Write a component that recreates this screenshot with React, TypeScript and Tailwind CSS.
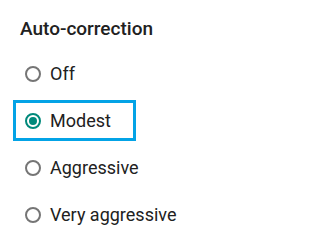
import React from "react";

const options = ["Off", "Modest", "Aggressive", "Very aggressive"];

function Radio({ checked }: { checked: boolean }) {
  return (
    <span
      className={`flex h-4 w-4 shrink-0 items-center justify-center rounded-full border-2 ${
        checked ? "border-[#00897b]" : "border-[#757575]"
      }`}
    >
      {checked ? <span className="h-2 w-2 rounded-full bg-[#00897b]" /> : null}
    </span>
  );
}

export default function App() {
  const selected = "Modest";
  return (
    <div
      className="h-[246px] w-[298px] bg-white pt-[17px]"
      style={{ fontFamily: "Roboto, 'Liberation Sans', sans-serif" }}
    >
      <h2 className="pl-5 text-[19px] font-medium leading-6 text-[#212121]">Auto-correction</h2>
      <div className="mt-[9px] flex flex-col">
        {options.map((option) => {
          const active = option === selected;
          return (
            <div key={option} className="flex h-[47px] items-center pl-[13px]">
              <div
                className={`flex h-[41px] items-center gap-[9px] pl-3 ${
                  active ? "w-[123px] border-[3px] border-[#03a3e6] pl-[9px]" : ""
                }`}
              >
                <Radio checked={active} />
                <span className="text-[18px] text-[#212121]">{option}</span>
              </div>
            </div>
          );
        })}
      </div>
    </div>
  );
}
